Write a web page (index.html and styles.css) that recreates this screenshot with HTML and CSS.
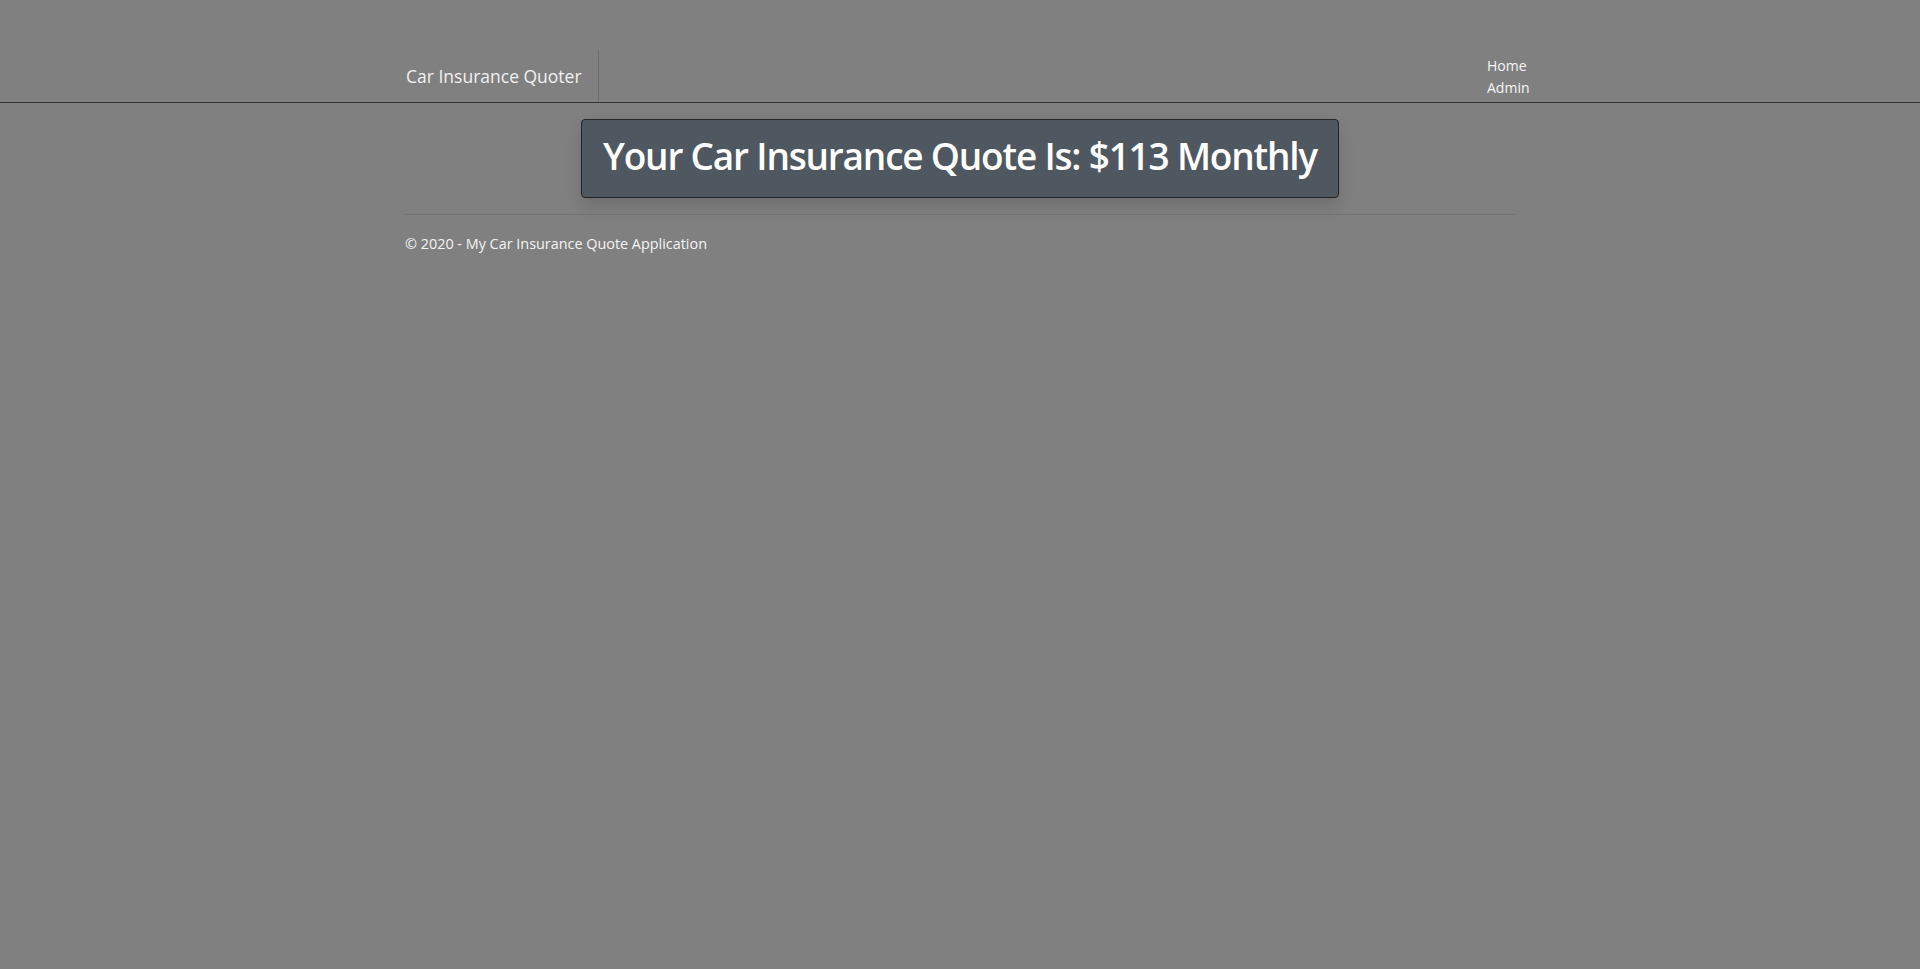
FILE: index.html
```html
<!DOCTYPE html>
<html lang="en">
<head>
<meta charset="utf-8">
<title>Car Insurance Quoter</title>
<link rel="stylesheet" href="styles.css">
</head>
<body>
<header class="site-header">
  <div class="header-inner">
    <a class="brand" href="#">Car Insurance Quoter</a>
    <ul class="nav">
      <li><a href="#">Home</a></li>
      <li><a href="#">Admin</a></li>
    </ul>
  </div>
</header>
<main class="container">
  <div class="quote">
    <h1 class="quote-title">Your Car Insurance Quote Is: $113 Monthly</h1>
  </div>
  <hr class="divider">
  <footer class="footer">© 2020 - My Car Insurance Quote Application</footer>
</main>
</body>
</html>
```

FILE: styles.css
```css
html, body {
  margin: 0;
  padding: 0;
}
body {
  background: #808080;
  font-family: "Open Sans", "Noto Sans", sans-serif;
  color: #f2f2f2;
}
a {
  color: inherit;
  text-decoration: none;
}
.site-header {
  border-bottom: 1px solid #333333;
}
.header-inner {
  width: 1110px;
  height: 102px;
  margin: 0 auto;
  display: flex;
  align-items: flex-end;
}
.brand {
  box-sizing: border-box;
  height: 52px;
  padding: 11px 16px 0 1px;
  border-right: 1px solid #6e6e6e;
  font-size: 17.5px;
  line-height: 30px;
  color: #f0f0f0;
}
.nav {
  list-style: none;
  margin: 0 -40px 0 auto;
  padding: 0 0 4px 0;
  width: 68px;
  font-size: 14px;
  line-height: 21.5px;
  color: #f7f7f7;
}
.container {
  width: 1110px;
  margin: 0 auto;
}
.quote {
  width: fit-content;
  margin: 16px auto 0;
  padding: 12px 21px 17px;
  background: #4f5760;
  border: 1px solid #222629;
  border-radius: 4px;
  box-shadow: 0 8px 16px rgba(0, 0, 0, 0.15);
}
.quote-title {
  margin: 0;
  font-size: 37px;
  font-weight: 600;
  letter-spacing: -1.2px;
  line-height: 48px;
  color: #ffffff;
}
.divider {
  margin: 16px 0 0;
  border: 0;
  border-top: 1px solid #737373;
}
.footer {
  padding-top: 18px;
  font-size: 14.4px;
  line-height: 21px;
  color: #f4f4f4;
}
```
